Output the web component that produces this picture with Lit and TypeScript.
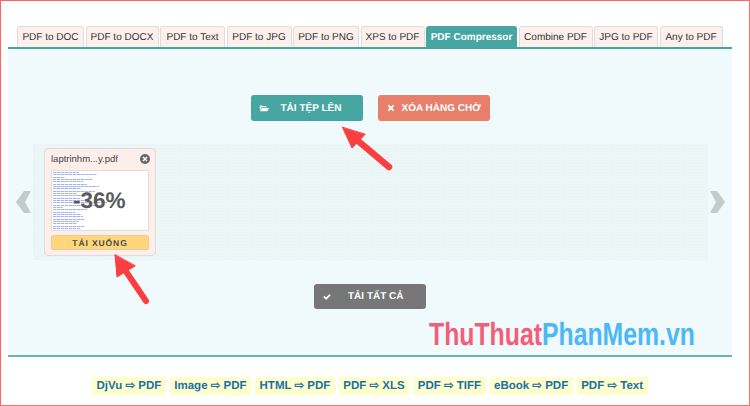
import { LitElement, html, css } from "lit";
import { customElement } from "lit/decorators.js";

const TABS: [string, number][] = [["PDF to DOC",67],["PDF to DOCX",73],["PDF to Text",65],["PDF to JPG",65],["PDF to PNG",66],["XPS to PDF",64],["PDF Compressor",91],["Combine PDF",74],["JPG to PDF",64],["Any to PDF",63]];
const CHIPS = ["DjVu ⇨ PDF","Image ⇨ PDF","HTML ⇨ PDF","PDF ⇨ XLS","PDF ⇨ TIFF","eBook ⇨ PDF","PDF ⇨ Text"];
const LINES = [26,44,12,40,30,34,46,28,42,24,36,28,32,54,48,10,34,22,28,30,32,26,24,32,28];

@customElement("app-root")
export class AppRoot extends LitElement {
  static styles = css`
    :host { display: block; font-family: "Liberation Sans", Arial, sans-serif; text-rendering: geometricPrecision; }
    * { box-sizing: border-box; }
    .page { position: relative; width: 750px; height: 406px; background: #fff; border: 1px solid #e8776a; border-left-color: #ff6464; border-top-color: #ff6464; padding: 25px 17px 0 7px; overflow: hidden; }
    .tabs { display: flex; gap: 1.500px; padding-left: 9px; height: 21px; }
    .tab { height: 21px; border: 1px solid #ddd; border-bottom: 0; border-radius: 3px 3px 0 0; background: #fdf0ec; color: #333; font-size: 10px; line-height: 21px; white-space: nowrap; text-align: center; }
    .tab.on { background: #47a5a2; border-color: #47a5a2; color: #fff; font-weight: bold; }
    .panel { width: 724px; height: 310px; background: #f0f9fb; border-top: 2px solid #47a5a2; border-bottom: 2px solid #66b5b3; display: flex; flex-direction: column; align-items: center; padding-top: 46px; }
    .row { display: flex; gap: 15px; }
    .btn { width: 112px; height: 26px; border-radius: 3px; color: #fff; font-size: 10px; font-weight: bold; display: flex; align-items: center; padding-left: 8px; }
    .btn svg { flex: none; width: 10px; height: 10px; fill: #fff; }
    .up { background: #47a5a2; } .up span { margin-left: 12px; }
    .clear { background: #e77f6b; } .clear span { margin-left: 6px; }
    .all { background: #777; margin-top: 24px; height: 25px; } .all span { margin-left: 16px; }
    .carousel { display: flex; align-items: center; gap: 2px; margin-top: 23px; width: 100%; padding-left: 8px; }
    .chev { width: 15px; height: 24px; flex: none; fill: #c2cccb; }
    .strip { width: 675px; height: 116px; background-color: #edf6f7; background-image: radial-gradient(#e7f1f1 0.6px, transparent 0.7px); background-size: 3px 3px; padding: 4px 11px; }
    .card { width: 112px; height: 108px; background: #fdeeea; border: 1px solid #ddd; border-radius: 4px; padding: 0 6px; display: flex; flex-direction: column; }
    .head { height: 20px; display: flex; align-items: center; justify-content: space-between; font-size: 9.500px; color: #444; }
    .head svg { width: 10px; height: 10px; margin-right: -1px; }
    .thumb { position: relative; margin-top: 1px; height: 61px; background: #fff; border: 1px solid #ddd; padding: 1px; display: flex; flex-direction: column; justify-content: space-between; overflow: hidden; }
    .line { flex: none; height: 1px; background: repeating-linear-gradient(90deg, #a8b2ee 0 3px, #d5daf8 3px 4px); }
    .pct { position: absolute; left: 21px; top: 16px; font-size: 22.500px; line-height: 28px; font-weight: bold; color: #5a5a5a; }
    .dl { margin-top: 4px; height: 15px; background: #ffd77a; border: 1px solid #e0cfa0; border-radius: 2px; text-align: center; font-size: 8.500px; line-height: 14px; font-weight: bold; color: #4a4a4a; letter-spacing: 0.9px; }
    .footer { display: flex; margin-top: 20px; margin-left: 84px; gap: 4px; }
    .chip { height: 18px; background: #ffffcc; color: #1a6fa8; font-weight: bold; font-size: 11.500px; line-height: 18px; padding: 0 4.500px; white-space: nowrap; }
    .mark { position: absolute; left: 428px; top: 315px; font-size: 32px; line-height: 36px; font-weight: bold; white-space: nowrap; transform-origin: left top; transform: scaleX(0.775); }
    .mark .a { color: #f0607a; } .mark .b { color: #4db8f5; }
    .arrows { position: absolute; left: -1px; top: -1px; width: 750px; height: 406px; pointer-events: none; }
  `;
  render() {
    return html`<div class="page">
      <div class="tabs">${TABS.map(([t, w]) => html`<div class="tab ${t === "PDF Compressor" ? "on" : ""}" style="width:${w}px">${t}</div>`)}</div>
      <div class="panel">
        <div class="row">
          <div class="btn up"><svg viewBox="0 0 12 12"><path d="M1 3h3l1 1h4v1H3L1 9zM3.500 6H12l-2 4H1z"/></svg><span>TẢI TỆP LÊN</span></div>
          <div class="btn clear"><svg viewBox="0 0 12 12"><path d="M3.500 2 6 4.500 8.500 2 10 3.500 7.500 6 10 8.500 8.500 10 6 7.500 3.500 10 2 8.500 4.500 6 2 3.500z"/></svg><span>XÓA HÀNG CHỜ</span></div>
        </div>
        <div class="carousel">
          <svg class="chev" viewBox="0 0 15 24"><path d="M15 1H8L0 12l8 11h7L9 12z"/></svg>
          <div class="strip">
            <div class="card">
              <div class="head"><span>laptrinhm...y.pdf</span>
                <svg viewBox="0 0 10 10"><circle cx="5" cy="5" r="5" fill="#666"/><path d="M3 3l4 4M7 3l-4 4" stroke="#fff" stroke-width="1.500"/></svg></div>
              <div class="thumb">
                ${LINES.map((w) => html`<div class="line" style="width:${w}px"></div>`)}
                <div class="pct">-36%</div>
              </div>
              <div class="dl">TẢI XUỐNG</div>
            </div>
          </div>
          <svg class="chev" viewBox="0 0 15 24"><path d="M0 1h7l8 11-8 11H0l6-11z"/></svg>
        </div>
        <div class="btn all"><svg viewBox="0 0 12 12"><path d="M1.500 6 3 4.500 5 6.500 9 2.500 10.500 4 5 9.500z"/></svg><span>TẢI TẤT CẢ</span></div>
      </div>
      <div class="footer">${CHIPS.map((c) => html`<div class="chip">${c}</div>`)}</div>
      <div class="mark"><span class="a">ThuThuat</span><span class="b">PhanMem.vn</span></div>
      <svg class="arrows" viewBox="0 0 750 406">
        <g fill="#fb3f41" stroke="#fb3f41" stroke-linejoin="round" stroke-linecap="round">
          <path d="M115 255 117 277 135 266z" stroke-width="1"/>
          <path d="M125 270 146 301" fill="none" stroke-width="6"/>
          <path d="M342.500 127.500 352 148 365 134.500z" stroke-width="1"/>
          <path d="M357 140 389 167" fill="none" stroke-width="6.500"/>
        </g>
      </svg>
    </div>`;
  }
}
